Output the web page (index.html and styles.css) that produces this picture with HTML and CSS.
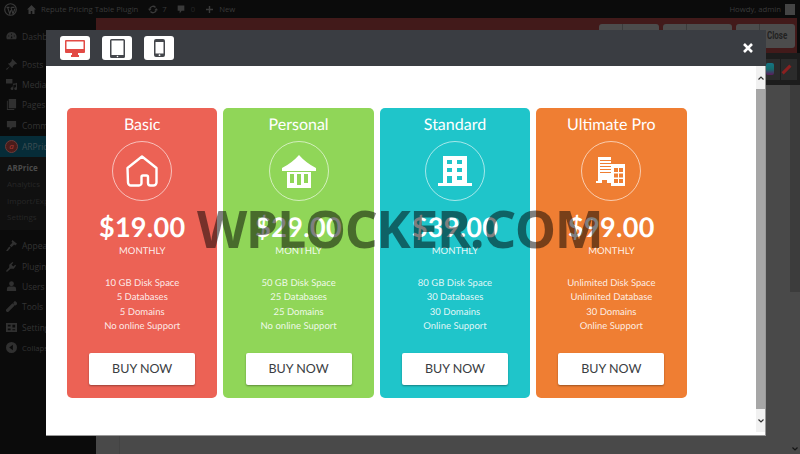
FILE: index.html
```html
<!DOCTYPE html>
<html lang="en">
<head>
  <meta charset="UTF-8" />
  <title>ARPrice</title>
  <link rel="stylesheet" href="styles.css">
</head>
<body>
  <header class="adminbar">
    <svg class="wp-logo" width="13" height="13" viewBox="0 0 18 18"><circle cx="9" cy="9" r="8" fill="none" stroke="currentColor" stroke-width="1.6"/><path d="M3.500 6h4M10 6h4.500M5 6l3 9 1.500-5M9.500 6l3 9 2.500-7" fill="none" stroke="currentColor" stroke-width="1.6"/></svg>
    <svg class="home" width="9" height="9" viewBox="0 0 12 12"><path d="M6 0 0 6h2v6h3V8h2v4h3V6h2z" fill="currentColor"/></svg>
    <span class="bar-title">Repute Pricing Table Plugin</span>
    <svg class="update" width="10" height="9" viewBox="0 0 14 12"><path d="M2.500 6a4.500 4.500 0 0 1 8-2.800M11.500 6a4.500 4.500 0 0 1-8 2.800" fill="none" stroke="currentColor" stroke-width="1.800"/><path d="M0 5h5L2.500 8zM9 7h5l-2.500-3z" fill="currentColor"/></svg>
    <span class="bar-count">7</span>
    <svg class="comment" width="8" height="9" viewBox="0 0 12 12"><path d="M1 0h10v8H7l-3 4V8H1z" fill="currentColor"/></svg>
    <span class="bar-count dim">0</span>
    <svg class="plus" width="7" height="7" viewBox="0 0 10 10"><path d="M4 0h2v4h4v2H6v4H4V6H0V4h4z" fill="currentColor"/></svg>
    <span>New</span>
    <span class="howdy">Howdy, admin</span>
    <span class="avatar"></span>
  </header>

  <div class="admin-main">
    <nav class="sidemenu">
      <div class="menu-item first">
        <svg class="menu-icon" viewBox="0 0 12 12"><path d="M6 1a5.500 5.500 0 0 0-5 8h10A5.500 5.500 0 0 0 6 1zM5.500 3h1v1h-1zM2.500 5h1v1h-1zM8.500 5h1v1h-1zM5 8l1.500-3 .5 3z" fill-rule="evenodd"/></svg>
        Dashboard
      </div>
      <div class="menu-item gap">
        <svg class="menu-icon" viewBox="0 0 12 12"><path d="M7 0l5 5-1 1-1-.5L7.500 8l-.5 2-2.500-2.500L1 12 0 11l4.500-3.500L2 5l2-.5L6.500 2 6 1z"/></svg>
        Posts
      </div>
      <div class="menu-item">
        <svg class="menu-icon" viewBox="0 0 12 12"><path d="M0 0h7v5H0zM8 5h2l2-1v6.500a1.500 1.500 0 1 1-1-1.400V6l-3 .5v4a1.500 1.500 0 1 1-1-1.400z"/></svg>
        Media
      </div>
      <div class="menu-item">
        <svg class="menu-icon" viewBox="0 0 12 12"><path d="M3 0h8v10H3zM1 2h1v9h7v1H1z"/></svg>
        Pages
      </div>
      <div class="menu-item">
        <svg class="menu-icon" viewBox="0 0 12 12"><path d="M1 1h10v7H7l-3 3V8H1z"/></svg>
        Comments
      </div>
      <div class="menu-item active"><span class="menu-logo">a</span>ARPrice</div>
      <div class="submenu">
        <div class="sub-item strong">ARPrice</div>
        <div class="sub-item">Analytics</div>
        <div class="sub-item">Import/Export</div>
        <div class="sub-item">Settings</div>
      </div>
      <div class="menu-item">
        <svg class="menu-icon" viewBox="0 0 12 12"><path d="M7 0l5 4-2 2-1-1-3 3-2-2 3-3-1-1zM3.500 7l1.500 1.500L2 12H0z"/></svg>
        Appearance
      </div>
      <div class="menu-item">
        <svg class="menu-icon" viewBox="0 0 12 12"><path d="M7 1l1 1-2 2 2 2 2-2 1 1-2.500 3.500H5L1 12l-1-1 3.500-4V4z"/></svg>
        Plugins
      </div>
      <div class="menu-item">
        <svg class="menu-icon" viewBox="0 0 12 12"><circle cx="6" cy="3" r="2.600"/><path d="M1 11V8.500A2.500 2.500 0 0 1 3.500 6h5A2.500 2.500 0 0 1 11 8.500V11z"/></svg>
        Users
      </div>
      <div class="menu-item">
        <svg class="menu-icon" viewBox="0 0 12 12"><path d="M9 0a3 3 0 0 1 3 3.500L10.500 5 8.500 4 8 2l1.500-2zM7 2.500l2.500 2.500-6.500 6.500a1.500 1.500 0 0 1-2.500-2.500z"/></svg>
        Tools
      </div>
      <div class="menu-item">
        <svg class="menu-icon" viewBox="0 0 12 12"><path d="M0 1h12v10H0zM2 3v2h3V3zM7 3v3h3V3zM2 7v2h3V7zM7 8v1h3V8z" fill-rule="evenodd"/></svg>
        Settings
      </div>
      <div class="menu-item small">
        <svg class="menu-icon" viewBox="0 0 12 12"><path d="M6 0a6 6 0 1 1 0 12A6 6 0 0 1 6 0zM7.500 3 3.500 6l4 3z" fill-rule="evenodd"/></svg>
        Collapse menu
      </div>
    </nav>
    <div class="editor">
      <div class="editor-top">
        <span class="top-btn first-btn"><span class="top-btn-side"></span></span>
        <span class="top-btn second-btn"><span class="top-btn-side"></span></span>
        <span class="top-btn close-btn"><span class="top-btn-side"></span><span class="top-btn-label">Close</span></span>
      </div>
      <div class="editor-tools">
        <span class="tool-btn swatch-btn"><span class="tool-swatch"></span></span>
        <span class="tool-btn pick-btn"><span class="tool-pick"></span></span>
      </div>
      <div class="editor-rest">
        <span class="rest-side"></span>
        <span class="page-scroll">
          <span class="page-thumb"></span>
          <svg class="page-arrow" width="6" height="4" viewBox="0 0 6 4"><path d="M0.500 0.500 3 3l2.500-2.500" fill="none" stroke="#141414" stroke-width="1.200"/></svg>
        </span>
      </div>
    </div>
  </div>

  <div class="modal">
    <div class="modal-head">
      <button class="device">
        <svg width="20" height="17" viewBox="0 0 20 17"><path d="M1 0h18a1 1 0 0 1 1 1v11a1 1 0 0 1-1 1h-6v2h1v2H6v-2h1v-2H1a1 1 0 0 1-1-1V1a1 1 0 0 1 1-1z" fill="#e24a45"/><path d="M1.500 1.500h17v7.500h-17z" fill="#fff"/></svg>
      </button>
      <button class="device">
        <svg width="15" height="19" viewBox="0 0 15 19"><path d="M1.500 0h12A1.500 1.500 0 0 1 15 1.500v16a1.500 1.500 0 0 1-1.500 1.500h-12A1.500 1.500 0 0 1 0 17.500v-16A1.500 1.500 0 0 1 1.500 0zM1.500 1.500v14.500h12V1.500z" fill="#44474c" fill-rule="evenodd"/><circle cx="7.500" cy="17.500" r="0.800" fill="#fff"/></svg>
      </button>
      <button class="device">
        <svg width="11" height="18" viewBox="0 0 11 18"><path d="M2 0h7a2 2 0 0 1 2 2v14a2 2 0 0 1-2 2H2a2 2 0 0 1-2-2V2a2 2 0 0 1 2-2zM1.500 3v11.500h8V3z" fill="#44474c" fill-rule="evenodd"/><circle cx="5.500" cy="16.200" r="0.900" fill="#fff"/></svg>
      </button>
      <svg class="modal-close" width="10" height="10" viewBox="0 0 10 10"><path d="M1 1l8 8M9 1l-8 8" stroke="#fff" stroke-width="2.600"/></svg>
    </div>
    <div class="modal-body">
      <div class="plans">
        <div class="plan basic">
          <h3>Basic</h3>
          <div class="plan-icon">
            <svg width="32" height="32" viewBox="0 0 32 32"><path d="M1.500 13 16 1.500 30.500 13v14.500a3 3 0 0 1-3 3h-3a2.500 2.500 0 0 1-2.500-2.500v-6a1.500 1.500 0 0 0-1.500-1.500h-3.500a1.500 1.500 0 0 0-1.500 1.500v6a2.500 2.500 0 0 1-2.500 2.500h-8a3 3 0 0 1-3-3z" fill="none" stroke="#fff" stroke-width="2.400" stroke-linejoin="round"/></svg>
          </div>
          <div class="price">$19.00</div>
          <div class="period">MONTHLY</div>
          <ul>
            <li>10 GB Disk Space</li>
            <li>5 Databases</li>
            <li>5 Domains</li>
            <li>No online Support</li>
          </ul>
          <a class="buy">BUY NOW</a>
        </div>
        <div class="plan personal">
          <h3>Personal</h3>
          <div class="plan-icon">
            <svg width="34" height="33" viewBox="0 0 34 33"><path d="M17 0Q24 8 34 13v3H0v-3Q10 8 17 0z" fill="#fff"/><path d="M5 17h24v16H5zM8 19v9h4v-9zM15 19v11h4V19zM22 19v9h4v-9z" fill="#fff" fill-rule="evenodd"/></svg>
          </div>
          <div class="price">$29.00</div>
          <div class="period">MONTHLY</div>
          <ul>
            <li>50 GB Disk Space</li>
            <li>25 Databases</li>
            <li>25 Domains</li>
            <li>No online Support</li>
          </ul>
          <a class="buy">BUY NOW</a>
        </div>
        <div class="plan standard">
          <h3>Standard</h3>
          <div class="plan-icon">
            <svg width="34" height="30" viewBox="0 0 34 30"><path d="M5 0h24v27h5v3H0v-3h5zM9 4v4h5V4zM19 4v4h5V4zM9 12v4h5v-4zM19 12v4h5v-4zM19 20v4h5v-4zM9 20v7h5v-7z" fill="#fff" fill-rule="evenodd"/></svg>
          </div>
          <div class="price">$39.00</div>
          <div class="period">MONTHLY</div>
          <ul>
            <li>80 GB Disk Space</li>
            <li>30 Databases</li>
            <li>30 Domains</li>
            <li>Online Support</li>
          </ul>
          <a class="buy">BUY NOW</a>
        </div>
        <div class="plan ultimate">
          <h3>Ultimate Pro</h3>
          <div class="plan-icon">
            <svg width="30" height="29" viewBox="0 0 30 29"><path d="M2 0h13v3H4v1h11v2H4v1h11v2H4v1h11v2H4v1h11v2H4v1h11v10H0v-2h2zM6 23v3h5v-3z" fill="#fff" fill-rule="evenodd"/><path d="M15 7h14v22H15zM18 11v4h4v-4zM23 11v4h4v-4zM18 16.500v4h4v-4zM23 16.500v4h4v-4zM18 22v4h4v-4zM23 22v4h4v-4z" fill="#fff" fill-rule="evenodd"/></svg>
          </div>
          <div class="price">$99.00</div>
          <div class="period">MONTHLY</div>
          <ul>
            <li>Unlimited Disk Space</li>
            <li>Unlimited Database</li>
            <li>30 Domains</li>
            <li>Online Support</li>
          </ul>
          <a class="buy">BUY NOW</a>
        </div>
      </div>
      <div class="scrollbar">
        <span class="arrow">
          <svg width="6" height="4" viewBox="0 0 6 4"><path d="M0.500 3.500 3 1l2.500 2.500" fill="none" stroke="#333" stroke-width="1.200"/></svg>
        </span>
        <span class="thumb"></span>
        <span class="arrow">
          <svg width="6" height="4" viewBox="0 0 6 4"><path d="M0.500 0.500 3 3l2.500-2.500" fill="none" stroke="#333" stroke-width="1.200"/></svg>
        </span>
      </div>
    </div>
  </div>

  <div class="watermark">WPLOCKER.COM</div>
</body>
</html>
```

FILE: styles.css
```css
* {
  box-sizing: border-box;
}

html, body {
  height: 100%;
}

body {
  margin: 0;
  background-color: #0b0b0b;
  font-family: 'Open Sans', sans-serif;
  overflow: hidden;
  display: flex;
  flex-direction: column;
}

.adminbar {
  height: 18px;
  background-color: #0b0b0b;
  color: #3a3a3a;
  font-size: 7.7px;
  display: flex;
  align-items: center;
  padding: 0 5px 0 4px;
}

.home {
  margin-left: 10px;
}

.bar-title {
  margin-left: 5px;
}

.update {
  margin-left: 10px;
}

.bar-count {
  margin-left: 4px;
}

.bar-count.dim {
  color: #262626;
  margin-left: 6px;
}

.comment {
  margin-left: 10px;
}

.plus {
  margin-left: 11px;
  margin-right: 6px;
}

.howdy {
  margin-left: auto;
  margin-right: 4px;
}

.avatar {
  width: 10px;
  height: 11px;
  background-color: #444;
}

.admin-main {
  flex: 1;
  display: flex;
  min-height: 0;
}

.sidemenu {
  width: 96px;
  background-color: #0b0b0b;
  color: #333;
  font-size: 8.5px;
  padding-top: 8px;
}

.menu-item {
  height: 20.4px;
  display: flex;
  align-items: center;
  padding-left: 6px;
  white-space: nowrap;
}

.menu-item.gap {
  margin-top: 7.6px;
}

.menu-item.small {
  font-size: 7.7px;
}

.menu-icon {
  width: 11px;
  height: 11px;
  margin-right: 5px;
  flex: none;
  fill: #303030;
}

.menu-item.active {
  background-color: #062c38;
  padding-left: 5px;
  height: 21px;
  color: #3c4c52;
}

.menu-logo {
  width: 13px;
  height: 13px;
  margin-right: 4px;
  border-radius: 50%;
  border: 1px solid #6a3c3a;
  background-color: #4a1c1a;
  color: #a83a34;
  font-size: 8px;
  font-style: italic;
  line-height: 10px;
  text-align: center;
}

.submenu {
  background-color: #101010;
  padding: 3px 0 4px 7px;
  margin-bottom: 6px;
  color: #262626;
  font-size: 8px;
}

.sub-item {
  height: 16.5px;
  line-height: 16px;
  white-space: nowrap;
}

.sub-item.strong {
  color: #4a4a4a;
  font-weight: 700;
}

.editor {
  flex: 1;
  display: flex;
  flex-direction: column;
}

.editor-top {
  height: 35px;
  margin-right: 3px;
  background-color: #421a1a;
  display: flex;
  justify-content: flex-end;
  align-items: flex-start;
  gap: 4px;
  padding: 6px 2px 0 0;
}

.top-btn {
  height: 24px;
  border-radius: 3px;
  background-color: #4c4c4c;
  color: #222;
  font-family: 'Roboto', sans-serif;
  font-size: 10px;
  font-weight: 700;
  line-height: 24px;
  display: flex;
}

.first-btn {
  width: 60px;
}

.second-btn {
  width: 69px;
}

.close-btn {
  width: 59px;
}

.top-btn-side {
  width: 24px;
  height: 100%;
  border-right: 1px solid #3c3c3c;
}

.top-btn-label {
  margin-left: 7px;
  transform: scaleX(0.8);
  transform-origin: left center;
}

.editor-tools {
  height: 32px;
  background-color: #1c1c1c;
  display: flex;
  justify-content: flex-end;
  align-items: center;
  gap: 1px;
  padding-right: 3px;
}

.tool-btn {
  width: 16px;
  height: 21px;
  background-color: #2b2b2b;
  display: flex;
  align-items: center;
  justify-content: flex-end;
}

.swatch-btn {
  padding-right: 6px;
}

.pick-btn {
  padding-right: 5px;
}

.tool-swatch {
  width: 8px;
  height: 12px;
  border-radius: 2px;
  background: linear-gradient(#167584, #146c6c 50%, #5c1a5c);
}

.tool-pick {
  width: 11px;
  height: 3px;
  background-color: #8a2020;
  transform: rotate(-45deg);
}

.editor-rest {
  flex: 1;
  background-color: #494949;
  display: flex;
  justify-content: space-between;
}

.rest-side {
  width: 24px;
  border-right: 1px solid #434343;
}

.page-scroll {
  width: 10px;
  display: flex;
  flex-direction: column;
  align-items: center;
}

.page-thumb {
  width: 100%;
  height: 207px;
  background-color: #3c3c3c;
}

.page-arrow {
  margin-top: auto;
  margin-bottom: 3px;
}

.modal {
  position: absolute;
  left: 46px;
  top: 30px;
  width: 720px;
  height: 406px;
  display: flex;
  flex-direction: column;
  border-bottom: 1px solid #999;
  border-right: 1px solid #999;
}

.modal-head {
  height: 36px;
  margin-right: -1px;
  background-color: #3a3d42;
  display: flex;
  align-items: center;
  gap: 12px;
  padding: 0 13px 0 14px;
}

.device {
  width: 30px;
  height: 24px;
  padding: 0;
  border: none;
  border-radius: 3px;
  background-color: #fff;
  display: flex;
  align-items: center;
  justify-content: center;
}

.modal-close {
  margin-left: auto;
}

.modal-body {
  flex: 1;
  background-color: #fff;
  display: flex;
  padding: 0 0 3px 21px;
}

.plans {
  flex: 1;
  display: flex;
  align-items: flex-start;
  gap: 6px;
  padding-top: 42px;
}

.plan {
  width: 150.4px;
  height: 290px;
  border-radius: 5px;
  color: #fff;
  text-align: center;
  font-family: 'Lato', sans-serif;
  padding-top: 7px;
  text-rendering: geometricPrecision;
}

.basic {
  background-color: #ec6255;
}

.personal {
  background-color: #90d658;
}

.standard {
  background-color: #1fc5ca;
}

.ultimate {
  background-color: #ef7e33;
}

.plan h3 {
  margin: 0;
  font-size: 16px;
  font-weight: 400;
  line-height: 20px;
}

.plan-icon {
  width: 60px;
  height: 60px;
  margin: 6px auto 0;
  border: 1px solid rgba(255, 255, 255, 0.6);
  border-radius: 50%;
  display: flex;
  align-items: center;
  justify-content: center;
}

.price {
  margin-top: 9px;
  font-size: 27px;
  font-weight: 700;
  line-height: 34px;
  letter-spacing: 0.3px;
}

.period {
  font-size: 9.5px;
  line-height: 14px;
  margin-top: 1px;
  color: rgba(255, 255, 255, 0.9);
}

.plan ul {
  list-style: none;
  margin: 18px 0 0;
  padding: 0;
  font-size: 9.5px;
  line-height: 14.35px;
  color: rgba(255, 255, 255, 0.88);
}

.buy {
  display: block;
  width: 106px;
  height: 32px;
  margin: 19px auto 0;
  border-radius: 2px;
  background-color: #fff;
  box-shadow: 0 1px 2px rgba(0, 0, 0, 0.35);
  color: #3a3d42;
  font-size: 12.5px;
  line-height: 32px;
}

.scrollbar {
  width: 9px;
  background-color: #f1f1f1;
  display: flex;
  flex-direction: column;
}

.arrow {
  height: 23px;
  display: flex;
  justify-content: center;
  align-items: center;
}

.thumb {
  flex: 1;
  background-color: #a6a6a6;
}

.watermark {
  position: absolute;
  left: 197px;
  top: 194px;
  color: rgba(0, 0, 0, 0.5);
  font-family: 'Open Sans', sans-serif;
  font-size: 52px;
  font-weight: 700;
  letter-spacing: -1.5px;
  line-height: 68px;
  white-space: nowrap;
}
```
